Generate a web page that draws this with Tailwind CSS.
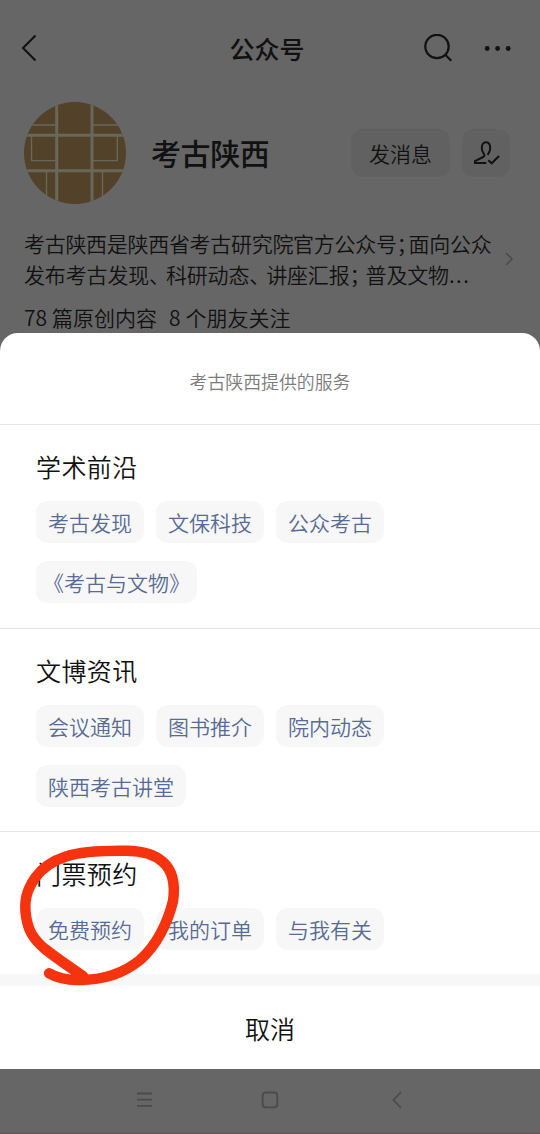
<!DOCTYPE html>
<html lang="zh-CN">
<head>
    <meta charset="UTF-8">
    <meta name="viewport" content="width=device-width, initial-scale=1.0">
    <title>考古陕西</title>
    <script src="https://cdn.jsdelivr.net/npm/@tailwindcss/browser@4"></script>
</head>
<body class="bg-[#666666] font-['Noto_Sans_CJK_SC',sans-serif] font-[350]">
    <div class="relative flex flex-col w-[540px] h-[1134px] overflow-hidden bg-[#666666] text-[#111111]">
        <!-- Dimmed profile page -->
        <div class="flex flex-col h-[333px] shrink-0">
            <header class="grid grid-cols-3 items-center h-24 pl-5 pr-7">
                <svg class="w-5 h-8" viewBox="0 0 20 32" fill="none" stroke="currentColor" stroke-width="2">
                    <path d="M15.5 3.5 3 16l12.5 12.5"/>
                </svg>
                <h1 class="text-[25px] leading-8 font-medium text-center pl-0.5 whitespace-nowrap">公众号</h1>
                <div class="flex items-center justify-end gap-8">
                    <svg class="w-7 h-7" viewBox="0 0 28 28" fill="none" stroke="currentColor" stroke-width="2.2">
                        <circle cx="13" cy="12.5" r="11.7"/>
                        <path d="m21 20.5 6.3 6.3"/>
                    </svg>
                    <svg class="w-7 h-7" viewBox="0 0 28 28" fill="currentColor">
                        <circle cx="3.2" cy="14.5" r="2.4"/>
                        <circle cx="13.6" cy="14.5" r="2.4"/>
                        <circle cx="24.2" cy="14.5" r="2.4"/>
                    </svg>
                </div>
            </header>

            <div class="flex items-center h-[114px] pl-6 pr-[30px]">
                <svg class="w-[102px] h-[102px]" viewBox="24 102 102 102" fill="none" stroke="#69675a">
                    <clipPath id="avatar"><circle cx="75" cy="153" r="51"/></clipPath>
                    <g clip-path="url(#avatar)">
                        <path d="M24 102h102v102H24z" fill="#524229" stroke="none"/>
                        <path d="M56.7 102v102M92 102v102M24 135.3h102M24 170.7h102" stroke-width="3"/>
                        <path d="M24 125h31M93 125h33M31.5 136v24.6H56M117.3 136v24.6H93M46.5 172v32M102.5 172v32" stroke-width="1.4"/>
                    </g>
                </svg>
                <h2 class="ml-[25px] pb-0.5 text-[30px] leading-10 font-medium tracking-[-0.4px] whitespace-nowrap">考古陕西</h2>
                <div class="flex gap-3 ml-auto">
                    <button class="w-[99px] h-12 pt-0.5 rounded-xl bg-[#616161] text-[21px]">发消息</button>
                    <button class="flex items-center justify-center w-12 h-12 rounded-xl bg-[#616161]">
                        <svg class="w-7 h-7" viewBox="0 0 28 28" fill="none" stroke="currentColor" stroke-width="2">
                            <path d="M14.3 24H3v-1.800l8.200-4.200c1.300-.7 1.600-1.600.8-2.800C10.500 13.200 9.800 11.500 9.800 9c0-3.600 1.500-5.800 4.200-5.800s4.200 2.200 4.200 5.800c0 2.600-.8 4.700-2.600 6.800"/>
                            <path d="m16.300 21.200 3.400 3.100 7.300-7.300"/>
                        </svg>
                    </button>
                </div>
            </div>

            <div class="flex items-center justify-between pt-[18px] pl-6 pr-[25px]">
                <p class="text-[21px] leading-[31px] whitespace-nowrap"><span class="tracking-[-0.3px]">考古陕西是陕西省考古研究院官方公众号</span><span class="tracking-[-9px]">；</span><span class="tracking-[-0.3px]">面向公众</span><br><span class="tracking-[-0.15px]">发布考古发现<span class="tracking-[-4.200px]">、</span>科研动态<span class="tracking-[-4.200px]">、</span>讲座汇报<span class="tracking-[-5px]">；</span>普及文物<span class="tracking-[1.500px]">...</span></span></p>
                <svg class="w-3 h-4" viewBox="0 0 12 16" fill="none" stroke="#4a4a4a" stroke-width="1.500">
                    <path d="m3 2 6 6-6 6"/>
                </svg>
            </div>
            <p class="mt-[11px] pl-6 text-[21px] leading-8 whitespace-nowrap">78<span class="inline-block w-[5px]"></span>篇原创内容<span class="inline-block w-3"></span>8<span class="inline-block w-[5px]"></span>个朋友关注</p>
        </div>

        <!-- Service sheet -->
        <div class="flex flex-col h-[736px] shrink-0 bg-white rounded-t-[18px]">
            <div class="flex items-center justify-center h-[91px] pt-[5px] text-[17.900px] text-[#7b7b7b]">考古陕西提供的服务</div>

            <section class="h-[203.500px] border-t border-[#e5e5e5] pt-[25px] px-9">
                <h3 class="text-[25px] leading-8 tracking-[0.4px]">学术前沿</h3>
                <div class="flex flex-wrap gap-x-3 gap-y-[18px] pt-[19px] text-[21px] text-[#576b95]">
                    <a class="flex items-center h-[42px] pt-0.5 px-3 rounded-xl bg-[#f7f7f7]">考古发现</a>
                    <a class="flex items-center h-[42px] pt-0.5 px-3 rounded-xl bg-[#f7f7f7]">文保科技</a>
                    <a class="flex items-center h-[42px] pt-0.5 px-3 rounded-xl bg-[#f7f7f7] mr-20">公众考古</a>
                    <a class="flex items-center h-[42px] w-[161px] pt-0.5 pl-[7px] rounded-xl bg-[#f7f7f7]">《考古与文物》</a>
                </div>
            </section>

            <section class="h-[203.500px] border-t border-[#e5e5e5] pt-[25px] px-9">
                <h3 class="text-[25px] leading-8 tracking-[0.4px]">文博资讯</h3>
                <div class="flex flex-wrap gap-x-3 gap-y-[18px] pt-[19px] text-[21px] text-[#576b95]">
                    <a class="flex items-center h-[42px] pt-0.5 px-3 rounded-xl bg-[#f7f7f7]">会议通知</a>
                    <a class="flex items-center h-[42px] pt-0.5 px-3 rounded-xl bg-[#f7f7f7]">图书推介</a>
                    <a class="flex items-center h-[42px] pt-0.5 px-3 rounded-xl bg-[#f7f7f7] mr-20">院内动态</a>
                    <a class="flex items-center h-[42px] pt-0.5 px-3 rounded-xl bg-[#f7f7f7]">陕西考古讲堂</a>
                </div>
            </section>

            <section class="h-[143px] border-t border-[#e5e5e5] pt-[25px] px-9">
                <h3 class="text-[25px] leading-8 tracking-[0.4px]">门票预约</h3>
                <div class="flex gap-3 pt-[19px] text-[21px] text-[#576b95]">
                    <a class="flex items-center h-[42px] pt-0.5 px-3 rounded-xl bg-[#f7f7f7]">免费预约</a>
                    <a class="flex items-center h-[42px] pt-0.5 px-3 rounded-xl bg-[#f7f7f7]">我的订单</a>
                    <a class="flex items-center h-[42px] pt-0.5 px-3 rounded-xl bg-[#f7f7f7]">与我有关</a>
                </div>
            </section>

            <div class="h-3 bg-[#f7f7f7]"></div>
            <button class="flex-1 pt-0.5 text-[25px]">取消</button>
        </div>

        <!-- System navigation -->
        <nav class="flex-1 border-b border-[#5a5358]">
            <svg class="w-[540px] h-16" viewBox="0 0 540 64" fill="none" stroke="#4b4b4b" stroke-width="1.800">
                <path d="M137 24.500h15M137 30.700h15M137 36.900h15"/>
                <rect x="262.700" y="23.500" width="14.600" height="14.800" rx="3"/>
                <path d="m401 23-7.500 8 7.500 8"/>
            </svg>
        </nav>

        <!-- Hand-drawn marker -->
        <svg class="absolute left-0 top-[830px] w-[200px] h-[170px]" viewBox="0 830 200 170" fill="none" stroke="#f5330f" stroke-width="10.500" stroke-linecap="round" stroke-linejoin="round">
            <path d="M49 973.300C57 978 68 980.300 80 980C103 980 124 973 140 960C157 945 168 922 173 901C175.500 884 173 871 163 862C154 854 141 851 127 850.800C103 850.500 82 851 66 856.500C52 861 42 868 35 878C26 891 24 902 26 916C28 930 33 939 45 949C59 960 71 968 83 976"/>
        </svg>
    </div>
</body>
</html>
